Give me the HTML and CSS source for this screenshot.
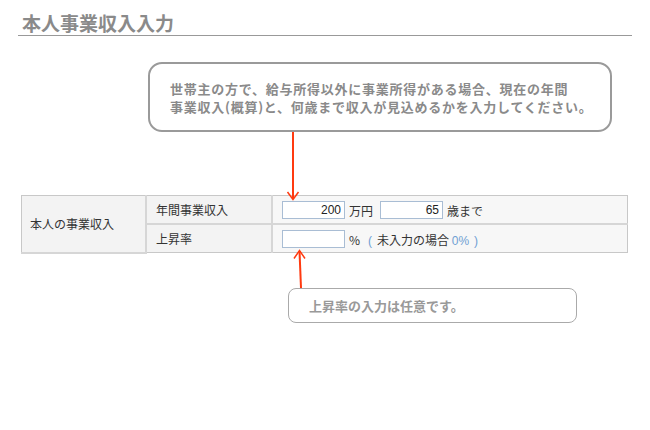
FILE: index.html
```html
<!DOCTYPE html>
<html lang="ja">
<head>
<meta charset="utf-8">
<link rel="stylesheet" href="styles.css">
</head>
<body>
<div class="page">
  <h1 class="title">本人事業収入入力</h1>
  <div class="callout callout-main">
    <p>世帯主の方で、給与所得以外に事業所得がある場合、現在の年間<br>事業収入(概算)と、何歳まで収入が見込めるかを入力してください。</p>
  </div>
  <table class="form">
    <tr>
      <th class="group" rowspan="2">本人の事業収入</th>
      <th class="label">年間事業収入</th>
      <td class="value">
        <input class="num" type="text" value="200"><span class="unit">万円</span><input class="num gap" type="text" value="65"><span class="unit">歳まで</span>
      </td>
    </tr>
    <tr>
      <th class="label">上昇率</th>
      <td class="value">
        <input class="num" type="text" value=""><span class="unit">%</span><span class="note"><span class="paren">(</span><span class="inner">未入力の場合 <span class="hint">0%</span></span><span class="paren">)</span></span>
      </td>
    </tr>
  </table>
  <div class="callout callout-sub">
    <p>上昇率の入力は任意です。</p>
  </div>
  <svg class="arrows" width="650" height="430" viewBox="0 0 650 430">
    <line x1="293" y1="132" x2="293" y2="199" stroke="#ff3a10" stroke-width="2"/>
    <polyline points="287.5,192 293,199.5 298.5,192" fill="none" stroke="#ff3a10" stroke-width="1.5"/>
    <line x1="301" y1="288" x2="299.5" y2="251" stroke="#ff3a10" stroke-width="2"/>
    <polyline points="294,258.5 299.5,250.5 305,258.5" fill="none" stroke="#ff3a10" stroke-width="1.5"/>
  </svg>
</div>
</body>
</html>
```
FILE: styles.css
```css
html, body {
  margin: 0;
  padding: 0;
  background: #ffffff;
}
body {
  font-family: "Noto Sans CJK JP", "Noto Sans", sans-serif;
  color: #333333;
}
.page {
  position: relative;
  width: 650px;
  height: 430px;
  overflow: hidden;
  display: flex;
  flex-direction: column;
  align-items: flex-start;
}
.title {
  margin: 0 18px;
  align-self: stretch;
  padding: 11px 0 0 4px;
  height: 24px;
  line-height: 24px;
  font-size: 19px;
  font-weight: bold;
  color: #8a8a8a;
  border-bottom: 1px solid #999999;
}
.callout {
  box-sizing: border-box;
  background: #ffffff;
}
.callout p {
  margin: 0;
  font-weight: bold;
  color: #8a8a8a;
}
.callout-main {
  margin: 26px 0 0 148px;
  width: 464px;
  height: 70px;
  border: 2px solid #9a9a9a;
  border-radius: 14px;
  padding: 16px 0 0 20px;
}
.callout-main p {
  font-size: 13px;
  line-height: 18px;
  letter-spacing: 0.75px;
}
.form {
  margin: 63px 0 0 21px;
  width: 607px;
  border-collapse: collapse;
  border: 1px solid #c8c8c8;
  font-size: 12px;
}
.form th, .form td {
  border: 2px solid #d6d6d6;
  padding: 0;
  height: 27px;
  text-align: left;
  font-weight: normal;
  color: #333333;
  white-space: nowrap;
}
.form tr:first-child th, .form tr:first-child td { border-top-color: #c8c8c8; border-top-width: 1px; }
.form tr:last-child th, .form tr:last-child td { border-bottom-color: #c8c8c8; border-bottom-width: 1px; }
.form .group { border-left: 1px solid #c8c8c8; }
.form .value { border-right: 1px solid #c8c8c8; }
.group {
  width: 115px;
  padding-left: 8px !important;
  background: #f3f3f3;
}
.label {
  width: 115px;
  padding-left: 9px !important;
  background: #f3f3f3;
}
.value {
  padding-left: 9px !important;
  background: #f7f7f7;
}
.num {
  box-sizing: border-box;
  width: 63px;
  height: 18px;
  margin: 0;
  padding: 0 3px;
  border: 1px solid #a9bdd4;
  background: #ffffff;
  text-align: right;
  font-family: "Liberation Sans", Arial, sans-serif;
  font-size: 12px;
  color: #222222;
  vertical-align: middle;
}
.num.gap { margin-left: 7px; }
.unit {
  margin-left: 4px;
  vertical-align: middle;
}
.unit + .gap { margin-left: 7px; }
.note {
  margin-left: 8px;
  vertical-align: middle;
}
.paren {
  color: #6f9fd3;
  font-family: "Liberation Sans", Arial, sans-serif;
}
.inner {
  margin: 0 5px;
}
.hint {
  color: #6f9fd3;
  font-family: "Liberation Sans", Arial, sans-serif;
}
.callout-sub {
  margin: 34px 0 0 288px;
  width: 289px;
  height: 35px;
  border: 1px solid #aaaaaa;
  border-radius: 8px;
  padding: 7px 0 0 20px;
}
.callout-sub p {
  font-size: 13px;
  line-height: 19px;
  color: #999999;
}
.arrows {
  position: absolute;
  left: 0;
  top: 0;
  pointer-events: none;
}
```
